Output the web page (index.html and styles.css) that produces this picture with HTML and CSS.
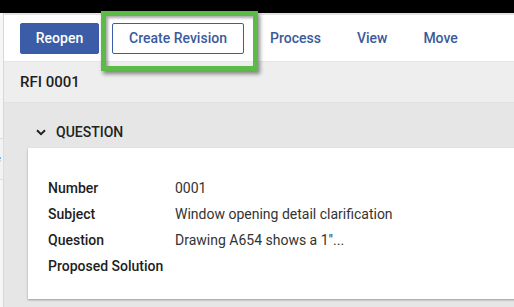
FILE: index.html
```html
<!DOCTYPE html>
<html lang="en">
<head>
  <meta charset="UTF-8" />
  <title>RFI 0001</title>
  <link rel="stylesheet" href="styles.css">
</head>
<body>
  <div class="topbar"></div>
  <div class="page">
    <div class="rail">
      <div class="rail-tab">Te</div>
    </div>
    <div class="main">
      <div class="toolbar">
        <button class="btn btn-primary">Reopen</button>
        <button class="btn btn-outline">Create Revision</button>
        <button class="btn-link">Process</button>
        <button class="btn-link">View</button>
        <button class="btn-link">Move</button>
      </div>
      <div class="title-bar">RFI 0001</div>
      <div class="content">
        <div class="section-head">
          <svg width="10" height="7" viewBox="0 0 10 7"><path d="M1 1.2 L5 5.2 L9 1.2" fill="none" stroke="#222" stroke-width="2"/></svg>
          <span>QUESTION</span>
        </div>
        <div class="card">
          <div class="row"><div class="label">Number</div><div class="value">0001</div></div>
          <div class="row"><div class="label">Subject</div><div class="value">Window opening detail clarification</div></div>
          <div class="row"><div class="label">Question</div><div class="value">Drawing A654 shows a 1"...</div></div>
          <div class="row"><div class="label">Proposed Solution</div><div class="value"></div></div>
        </div>
      </div>
    </div>
  </div>
  <div class="highlight"></div>
</body>
</html>
```

FILE: styles.css
```css
body {
  margin: 0;
  width: 514px;
  height: 307px;
  overflow: hidden;
  font-family: Roboto, "Liberation Sans", sans-serif;
  font-size: 14px;
  color: #222;
  background: #e6e6e6;
  position: relative;
}
.topbar {
  height: 13px;
  background: #000;
}
.page {
  display: flex;
  height: 294px;
}
.rail {
  width: 3px;
  flex-shrink: 0;
  background: #f6f6f6;
  border-right: 1px solid #d8d8d8;
  position: relative;
}
.rail-tab {
  position: absolute;
  top: 125px;
  left: -12px;
  width: 14px;
  height: 40px;
  background: #f2f2f2;
  border: 1px solid #ddd;
  overflow: hidden;
  font-size: 11px;
  line-height: 40px;
  color: #555;
}
.main {
  flex: 1;
  min-width: 0;
  display: flex;
  flex-direction: column;
}
.toolbar {
  height: 46px;
  border-top: 2px solid #e3e3e3;
  border-bottom: 1px solid #e6e6e6;
  background: #fff;
  display: flex;
  align-items: center;
  padding-left: 17px;
  margin-left: -1px;
}
.btn {
  font-family: inherit;
  font-size: 14px;
  font-weight: 500;
  height: 31px;
  border-radius: 2px;
  cursor: pointer;
}
.btn-primary {
  width: 79px;
  background: #3b5ca6;
  border: 1px solid #3b5ca6;
  color: #fff;
}
.btn-outline {
  width: 132px;
  margin-left: 13px;
  background: #fff;
  border: 1px solid #3b5ca6;
  color: #3b5a9c;
}
.btn-link {
  font-family: inherit;
  font-size: 14px;
  font-weight: 500;
  background: none;
  border: none;
  color: #3b5a9c;
  padding: 0 18px;
  cursor: pointer;
}
.btn-outline + .btn-link {
  margin-left: 8px;
}
.title-bar {
  height: 40px;
  line-height: 40px;
  background: #eeeeee;
  border-bottom: 1px solid #e2e2e2;
  padding-left: 16px;
  font-size: 15px;
  font-weight: 500;
  color: #1e1e1e;
}
.content {
  flex: 1;
  padding-left: 24px;
  overflow: hidden;
}
.section-head {
  display: flex;
  align-items: center;
  gap: 10px;
  height: 20px;
  margin: 19px 0 6px 8px;
  font-weight: 500;
  color: #222;
}
.card {
  background: #fff;
  margin-right: -20px;
  padding: 27px 20px 20px;
  box-shadow: 0 1px 2px rgba(0, 0, 0, 0.35);
}
.row {
  display: flex;
  line-height: 26px;
  height: 26px;
}
.label {
  width: 127px;
  font-weight: 500;
  color: #1e1e1e;
}
.value {
  color: #333;
}
.highlight {
  position: absolute;
  left: 101px;
  top: 11px;
  width: 147px;
  height: 50px;
  border: 5px solid #5cba47;
  box-shadow: 2px 3px 4px rgba(0, 0, 0, 0.45), inset 2px 2px 3px rgba(0, 0, 0, 0.35);
}
```
